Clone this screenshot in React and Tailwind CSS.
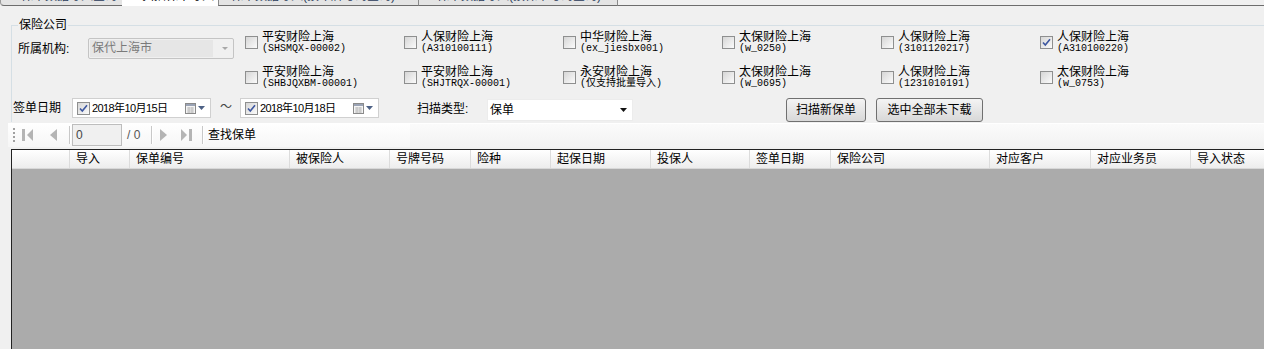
import React from "react";

const companies = [
  ["平安财险上海", "(SHSMQX-00002)"],
  ["人保财险上海", "(A310100111)"],
  ["中华财险上海", "(ex_jiesbx001)"],
  ["太保财险上海", "(w_0250)"],
  ["人保财险上海", "(3101120217)"],
  ["人保财险上海", "(A310100220)", true],
  ["平安财险上海", "(SHBJQXBM-00001)"],
  ["平安财险上海", "(SHJTRQX-00001)"],
  ["永安财险上海", "(仅支持批量导入)"],
  ["太保财险上海", "(w_0695)"],
  ["人保财险上海", "(1231010191)"],
  ["太保财险上海", "(w_0753)"],
];

const columns = [
  ["", "w-[58px]"],
  ["导入", "w-[60px]"],
  ["保单编号", "w-[160px]"],
  ["被保险人", "w-[100px]"],
  ["号牌号码", "w-[81px]"],
  ["险种", "w-[80px]"],
  ["起保日期", "w-[100px]"],
  ["投保人", "w-[99px]"],
  ["签单日期", "w-[81px]"],
  ["保险公司", "w-[159px]"],
  ["对应客户", "w-[101px]"],
  ["对应业务员", "w-[100px]"],
  ["导入状态", "w-[100px]"],
];

const Box = ({ checked }) => (
  <span className="w-[13px] h-[13px] shrink-0 border border-[#8e8f8f] bg-gradient-to-br from-[#d6d6d6] to-[#fbfbfb] flex items-center justify-center">
    {checked && (
      <svg width="9" height="9" viewBox="0 0 9 9">
        <path d="M1 4.5 L3.3 7 L8 1.2" stroke="#3d57a0" strokeWidth="1.6" fill="none" />
      </svg>
    )}
  </span>
);

const Company = ({ name, code, checked }) => (
  <div className="flex items-center gap-[4px] h-[23px]">
    <Box checked={checked} />
    <div className="flex flex-col">
      <span className="text-[12px] leading-[12px] whitespace-nowrap">{name}</span>
      <span className="font-['Liberation_Mono','Noto_Sans_CJK_SC',monospace] text-[10px] leading-[11px] whitespace-nowrap">
        {code}
      </span>
    </div>
  </div>
);

const Tab = ({ label, className }) => (
  <div className={"h-[6px] overflow-hidden " + className}>
    <div className="-mt-[10px] text-[12px] leading-[12px] whitespace-nowrap">{label}</div>
  </div>
);

const DatePicker = ({ value }) => (
  <div className="w-[139px] h-[20px] bg-white border border-[#d0d0d0] flex items-center pl-[4px]">
    <Box checked />
    <span className="ml-[2px] text-[11px] tracking-[-0.6px] leading-[14px]">{value}</span>
    <svg className="ml-auto" width="11" height="11" viewBox="0 0 11 11">
      <rect x="0.5" y="0.5" width="10" height="10" fill="#f4f4f4" stroke="#8a8a8a" />
      <rect x="1" y="1" width="9" height="2" fill="#9aa3b5" />
      <path d="M2 5h7M2 7h7M2 9h7M4 4v6M7 4v6" stroke="#b5b5b5" strokeWidth="0.8" />
    </svg>
    <svg className="ml-[2px] mr-[5px]" width="7" height="4" viewBox="0 0 7 4">
      <path d="M0 0h7L3.5 4z" fill="#4d6185" />
    </svg>
  </div>
);

const Sep = ({ className }) => (
  <span className={"w-[2px] h-[18px] border-l border-[#c8c8c8] border-r border-r-white " + className} />
);

const App = () => {
  return (
    <div className="w-[1264px] h-[349px] bg-[#f0f0f0] overflow-hidden flex flex-col font-['Liberation_Sans','Noto_Sans_CJK_SC',sans-serif] text-black">
      {/* tab strip, only the bottom edge is visible */}
      <div className="flex shrink-0 text-[#2a3a5a]">
        <Tab label="保单数据导入查询" className="w-[122px] pl-[20px] bg-[#e4e4e4] border-b border-[#6d6d6d] border-l border-l-[#9a9a9a] rounded-bl-[4px]" />
        <Tab label="扫描保单导入" className="w-[96px] pl-[20px] bg-white text-black" />
        <Tab label="保单数据导入(按车牌号码查询)" className="w-[200px] pl-[12px] bg-[#e4e4e4] border-b border-[#6d6d6d] border-l border-l-[#8a8a8a]" />
        <Tab label="保单数据导入(按保单号码查询)" className="w-[200px] pl-[18px] bg-[#e4e4e4] border-b border-[#6d6d6d] border-l border-r border-l-[#8a8a8a] border-r-[#8a8a8a]" />
        <div className="flex-1 h-[6px] border-b border-[#6d6d6d]" />
      </div>

      {/* insurer group */}
      <fieldset className="mt-[13px] ml-[11px] h-[103px] border-l border-t border-[#d5dfe5] pl-[1px] min-w-0 shrink-0">
        <legend className="ml-[5px] px-[1px] text-[12px] leading-[12px]">保险公司</legend>
        <div className="flex">
          <div className="w-[232px] shrink-0 flex items-center h-[21px] mt-[7px]">
            <span className="ml-[5px] w-[70px] text-[12px] leading-[14px]">所属机构:</span>
            <div className="w-[146px] h-[21px] border border-[#c4c4c4] rounded-[2px] flex items-center p-[1px]">
              <div className="w-[123px] h-full bg-[#e6e6e6] text-[#7a7a7a] text-[12px] leading-[17px] pl-[2px]">保代上海市</div>
              <svg className="ml-[9px]" width="6" height="3" viewBox="0 0 6 3">
                <path d="M0 0h6L3 3z" fill="#a8a8a8" />
              </svg>
            </div>
          </div>
          <div className="grid grid-cols-[repeat(6,159px)] gap-y-[12px]">
            {companies.map(([name, code, checked], i) => (
              <Company key={i} name={name} code={code} checked={checked} />
            ))}
          </div>
        </div>

        <div className="flex items-start mt-[9px]">
          <span className="w-[59px] mt-[3px] text-[12px] leading-[14px]">签单日期</span>
          <DatePicker value="2018年10月15日" />
          <span className="ml-[9px] w-[20px] mt-[2px] text-[12px] leading-[14px] text-[#444]">～</span>
          <DatePicker value="2018年10月18日" />
          <span className="ml-[38px] w-[70px] mt-[4px] text-[12px] leading-[14px]">扫描类型:</span>
          <div className="w-[146px] h-[22px] mt-[1px] bg-white border border-[#ececec] flex items-center pl-[2px] pr-[5px]">
            <span className="text-[12px] leading-[14px]">保单</span>
            <svg className="ml-auto" width="7" height="4" viewBox="0 0 7 4">
              <path d="M0 0h7L3.5 4z" fill="#111" />
            </svg>
          </div>
          <button className="ml-[153px] w-[80px] h-[24px] border border-[#707070] rounded-[3px] bg-gradient-to-b from-[#f4f4f4] to-[#d8d8d8] text-[12px] leading-[14px]">
            扫描新保单
          </button>
          <button className="ml-[10px] w-[107px] h-[24px] border border-[#707070] rounded-[3px] bg-gradient-to-b from-[#f4f4f4] to-[#d8d8d8] text-[12px] leading-[14px]">
            选中全部未下载
          </button>
        </div>
      </fieldset>

      {/* navigator toolbar */}
      <div className="flex h-[24px] mt-[1px] shrink-0">
        <div className="ml-[8px] w-[402px] h-full bg-gradient-to-b from-white to-[#f6f6f6] flex items-center">
          <span className="ml-[5px] w-[2px] h-[16px] bg-[radial-gradient(circle,#a0a0a0_1px,transparent_1px)] bg-[length:2px_4px]" />
          <svg className="ml-[7px]" width="11" height="12" viewBox="0 0 11 12">
            <rect x="0" y="0" width="3" height="12" fill="#b4b4b4" />
            <path d="M11 0v12L5 6z" fill="#b4b4b4" />
          </svg>
          <svg className="ml-[17px]" width="7" height="12" viewBox="0 0 7 12">
            <path d="M7 0v12L0 6z" fill="#b4b4b4" />
          </svg>
          <Sep className="ml-[12px]" />
          <div className="ml-[1px] w-[50px] h-[22px] border border-[#bdbdbd] bg-[#f0f0f0] text-[12px] leading-[20px] pl-[3px] text-[#444]">0</div>
          <span className="ml-[5px] w-[17px] text-[12px] leading-[14px] text-[#555] whitespace-nowrap">/ 0</span>
          <Sep className="ml-[7px]" />
          <svg className="ml-[7px]" width="7" height="12" viewBox="0 0 7 12">
            <path d="M0 0v12L7 6z" fill="#b4b4b4" />
          </svg>
          <svg className="ml-[14px]" width="11" height="12" viewBox="0 0 11 12">
            <path d="M0 0v12L6 6z" fill="#b4b4b4" />
            <rect x="8" y="0" width="3" height="12" fill="#b4b4b4" />
          </svg>
          <Sep className="ml-[10px]" />
          <span className="ml-[4px] text-[12px] leading-[14px]">查找保单</span>
        </div>
        <div className="flex-1 h-full bg-gradient-to-b from-[#fbfbfb] to-[#f2f2f2] border-t border-white" />
      </div>

      {/* data grid */}
      <div className="ml-[11px] mt-[2px] flex-1 flex flex-col border-t border-l border-[#222] bg-[#ababab] min-h-0">
        <div className="flex h-[19px] shrink-0 bg-gradient-to-b from-white to-[#ededed] border-b border-[#d8d8d8]">
          {columns.map(([label, w], i) => (
            <div
              key={i}
              className={w + " shrink-0 h-full border-r border-[#dcdcdc] pl-[6px] text-[12px] leading-[19px] whitespace-nowrap"}
            >
              {label}
            </div>
          ))}
        </div>
        <div className="flex-1" />
      </div>
    </div>
  );
};

export default App;
